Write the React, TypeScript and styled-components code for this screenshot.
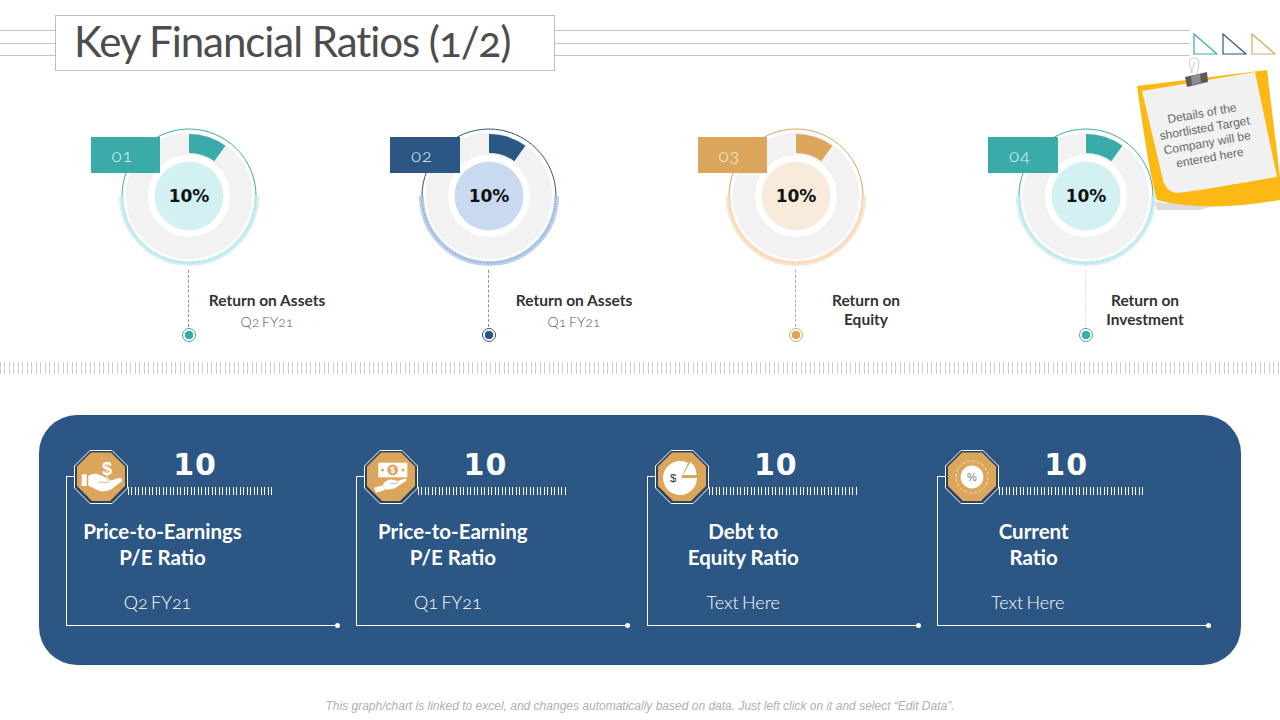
import * as React from 'react'
import styled, { createGlobalStyle } from 'styled-components'

// ___________________________________________________________________

const teal = '#3aaba8'
const navy = '#2c5784'
const tan = '#dba55c'

const metrics = [
  { tag: '01', tagLeft: -25, tagWidth: 69, color: teal, tint: '#d3f1f3', band: '#d3f1f3', stem: '#8a9a9c', name: ['Return on Assets'], period: 'Q2 FY21', shift: 1 },
  { tag: '02', tagLeft: -26, tagWidth: 70, color: navy, tint: '#c9d9ef', band: '#bccfeb', stem: '#8a9a9c', name: ['Return on Assets'], period: 'Q1 FY21', shift: 8 },
  { tag: '03', tagLeft: -25, tagWidth: 69, color: tan, tint: '#f9ebdc', band: '#fae3cc', stem: '#a8a8a8', name: ['Return on', 'Equity'], period: '', shift: -7 },
  { tag: '04', tagLeft: -25, tagWidth: 70, color: teal, tint: '#d3f1f3', band: '#d3f1f3', stem: '#d5e4e6', name: ['Return on', 'Investment'], period: '', shift: -18 }
]

const cards = [
  { icon: 'hand', title: ['Price-to-Earnings', 'P/E Ratio'], sub: 'Q2 FY21', shift: -5, ticks: 146 },
  { icon: 'cash', title: ['Price-to-Earning', 'P/E Ratio'], sub: 'Q1 FY21', shift: -5, ticks: 148 },
  { icon: 'pie', title: ['Debt to', 'Equity Ratio'], sub: 'Text Here', shift: 0, ticks: 150 },
  { icon: 'percent', title: ['Current', 'Ratio'], sub: 'Text Here', shift: -6, ticks: 147 }
]

// ___________________________________________________________________

const Dial = ({ color, tint, band }: { color: string; tint: string; band: string }) => (
  <svg width="146" height="146" viewBox="0 0 146 146">
    <path d="M5.5 73 A67.5 67.5 0 0 0 140.5 73" fill="none" stroke={band} strokeWidth="5" />
    <circle cx="73" cy="73" r="52" fill="none" stroke="#f2f2f2" strokeWidth="22" />
    <path d="M6 73 A67 67 0 0 1 140 73" fill="none" stroke={color} strokeWidth="1" />
    <path d="M6 73 A67 67 0 0 0 140 73" fill="none" stroke={color} strokeWidth="0.8" strokeDasharray="1 1.4" opacity="0.75" />
    <path d="M73 11 A62 62 0 0 1 109.4 22.8 L98.3 38.2 A43 43 0 0 0 73 30 Z" fill={color} />
    <circle cx="73" cy="73" r="34.5" fill={tint} />
  </svg>
)

const Octagon = () => (
  <>
    <polygon points="16,0.5 38,0.5 53.5,16 53.5,38 38,53.5 16,53.5 0.5,38 0.5,16" fill="#2b4463" stroke="#fff" strokeWidth="1" />
    <polygon points="17,2.5 37,2.5 51,16.5 51,36 36,51 18,51 3,36 3,16.5" fill={tan} />
  </>
)

const HandIcon = () => (
  <>
    <text x="33" y="25" textAnchor="middle" fontFamily="Liberation Sans, sans-serif" fontWeight="700" fontSize="18" fill="#fff">$</text>
    <rect x="7.7" y="24.3" width="5" height="11.7" fill="#fff" />
    <path d="M14.3 26 C18 23 23 23 27 25.5 L33 28 L37 30.5 L45 28 C48 28 49 30 47.5 31.5 L37 39.5 C32 42 27 42 23 40 L14.3 35.5 Z" fill="#fff" />
    <path d="M25 32 L33 32.5 C35.5 32.5 36 30.5 33 29" fill="none" stroke={tan} strokeWidth="0.8" />
  </>
)

const CashIcon = () => (
  <>
    <rect x="14.3" y="12.7" width="29" height="14.6" fill="#fff" />
    <circle cx="28.7" cy="20" r="5.4" fill={tan} />
    <circle cx="18.5" cy="20" r="1.6" fill={tan} />
    <circle cx="39" cy="20" r="1.6" fill={tan} />
    <text x="28.7" y="23" textAnchor="middle" fontFamily="Liberation Sans, sans-serif" fontWeight="700" fontSize="8.5" fill="#fff">$</text>
    <path d="M10 37.7 L19.3 35 L21 40 L12 42.7 Z" fill="#fff" />
    <path d="M19 34 C22 30 26 28.5 30 30 L34 31 L41 28.5 C43 28.5 43 30 42 31 L32 37.5 C28 39.5 25 39.5 21 39.5 Z" fill="#fff" />
    <path d="M26 33.5 L32 33.5 C34 33.5 34.5 31.8 33 31" fill="none" stroke={tan} strokeWidth="0.7" />
  </>
)

const PieIcon = () => (
  <>
    <path d="M33 13 A17 17 0 1 0 42 28 L26 28 Z" fill="#fff" />
    <path d="M28 25 L35.5 12 A17 17 0 0 1 41.5 25 Z" fill="#fff" />
    <text x="18.3" y="32" textAnchor="middle" fontFamily="Liberation Sans, sans-serif" fontSize="11.5" fill="#333">$</text>
  </>
)

const PercentIcon = () => (
  <>
    <circle cx="27" cy="27" r="16" fill="none" stroke="#f9e8c8" strokeWidth="1" strokeDasharray="3 2" />
    <circle cx="27" cy="27" r="11.4" fill="#fff" />
    <text x="27" y="31" textAnchor="middle" fontFamily="Liberation Sans, sans-serif" fontSize="11" fill="#777">%</text>
  </>
)

const icons: Record<string, React.ReactNode> = {
  hand: <HandIcon />,
  cash: <CashIcon />,
  pie: <PieIcon />,
  percent: <PercentIcon />
}

const Triangle = ({ color }: { color: string }) => (
  <svg width="25" height="22" viewBox="0 0 25 22">
    <path d="M1 1 V21 H24 Z" fill="none" stroke={color} strokeWidth="1.2" />
  </svg>
)

// ___________________________________________________________________

const App = () => (
  <Page>
    <GlobalStyle />
    <Header>
      <Rule $width={55} />
      <TitleBox>
        <Title>Key Financial Ratios (1/2)</Title>
      </TitleBox>
      <Rule $width={635} />
      <Triangles>
        <Triangle color={teal} />
        <Triangle color={navy} />
        <Triangle color={tan} />
      </Triangles>
    </Header>

    <Metrics>
      {metrics.map(m => (
        <Metric key={m.tag}>
          <DialWrap>
            <Dial color={m.color} tint={m.tint} band={m.band} />
            <Tag $color={m.color} $left={m.tagLeft} $width={m.tagWidth}>{m.tag}</Tag>
            <Percent>10%</Percent>
          </DialWrap>
          <Foot>
            <Stem $color={m.stem}>
              <Pin $color={m.color} />
            </Stem>
            <Label $shift={m.shift}>
              <LabelName $lines={m.name.length}>
                {m.name.map(line => (
                  <div key={line}>{line}</div>
                ))}
              </LabelName>
              {m.period && <Period>{m.period}</Period>}
            </Label>
          </Foot>
        </Metric>
      ))}
    </Metrics>

    <TickBand />

    <Panel>
      {cards.map(c => (
        <Card key={c.title[0]}>
          <CardHead>
            <Badge width="54" height="54" viewBox="0 0 54 54">
              <Octagon />
              {icons[c.icon]}
            </Badge>
            <HeadRight>
              <Value>10</Value>
              <HeadTicks $width={c.ticks} />
            </HeadRight>
          </CardHead>
          <CardTitle>
            {c.title.map(line => (
              <div key={line}>{line}</div>
            ))}
          </CardTitle>
          <CardSub $shift={c.shift}>{c.sub}</CardSub>
        </Card>
      ))}
    </Panel>

    <Note>
      <svg width="160" height="200" viewBox="0 0 160 200">
        <path d="M35 182 L37 190 L80 190 L92 186 Z" fill="#dcdcdc" />
        <path d="M17 66 L147 50 L160 157 L160 180 C120 187 75 190 37 180 C32 165 26 130 17 66 Z" fill="#fdb913" />
        <path d="M22 71 L135 52 L157 157 C120 163 85 170 57 173 C50 172 45 168 43 160 Z" fill="#f1f1f1" />
        <path d="M73 53 C68 44 68 38 74 38 C80 38 80 44 77 53 M71 53 C72 49 74 46 75 42" fill="none" stroke="#cfd4d8" strokeWidth="1.2" />
        <path d="M65 57 L87 52 L88 62 L67 67 Z" fill="#5c5c5c" />
        <path d="M71 56 L80 54 L81 63 L72 65 Z" fill="#8d8d8d" />
      </svg>
      <NoteText>Details of the shortlisted Target Company will be entered here</NoteText>
    </Note>

    <Disclaimer>This graph/chart is linked to excel, and changes automatically based on data. Just left click on it and select “Edit Data”.</Disclaimer>
  </Page>
)

export default App

// ___________________________________________________________________

const GlobalStyle = createGlobalStyle`
  html, body {
    margin: 0;
    padding: 0;
    background: #fff;
  }
`

const Page = styled.div`
  position: relative;
  width: 1280px;
  height: 720px;
  overflow: hidden;
  background: #fff;
  font-family: Lato, "Liberation Sans", sans-serif;
  font-variant-numeric: oldstyle-nums;
`

const Header = styled.header`
  display: flex;
  align-items: flex-start;
  height: 70px;
  padding-top: 15px;
  box-sizing: border-box;
`

const Rule = styled.div<{ $width: number }>`
  flex: 0 0 ${p => p.$width}px;
  height: 26px;
  box-sizing: border-box;
  margin-top: 15px;
  border-top: 1px solid #c4c4c4;
  border-bottom: 1px solid #c4c4c4;
  background: linear-gradient(#c4c4c4, #c4c4c4) 0 12px / 100% 1px no-repeat;
`

const TitleBox = styled.div`
  flex: 0 0 500px;
  height: 56px;
  box-sizing: border-box;
  border: 1px solid #bdbdbd;
  padding-left: 18px;
`

const Title = styled.h1`
  margin: 0;
  font-size: 42px;
  font-weight: 400;
  line-height: 50px;
  color: #4d4d4d;
  letter-spacing: -1.05px;
`

const Triangles = styled.div`
  display: flex;
  gap: 4px;
  margin: 18px 0 0 3px;
`

const Metrics = styled.section`
  display: grid;
  grid-template-columns: 300px 307px 290px 1fr;
  height: 219px;
  margin-top: 53px;
  padding-left: 116px;
`

const Metric = styled.div`
  display: flex;
  flex-direction: column;
`

const DialWrap = styled.div`
  position: relative;
  width: 146px;
  height: 146px;

  svg {
    display: block;
  }
`

const Tag = styled.div<{ $color: string; $left: number; $width: number }>`
  position: absolute;
  left: ${p => p.$left}px;
  top: 14px;
  width: ${p => p.$width}px;
  height: 36px;
  padding-right: 6px;
  box-sizing: border-box;
  display: flex;
  align-items: center;
  justify-content: center;
  background: ${p => p.$color};
  color: #e6f6f5;
  font-size: 18px;
  font-weight: 300;
  letter-spacing: 1px;
`

const Percent = styled.div`
  position: absolute;
  inset: 0;
  display: flex;
  align-items: center;
  justify-content: center;
  font-family: "DejaVu Sans", sans-serif;
  font-size: 17px;
  font-weight: 700;
  color: #111;
`

const Foot = styled.div`
  display: flex;
`

const Stem = styled.div<{ $color: string }>`
  position: relative;
  flex: 0 0 14px;
  height: 73px;
  margin-left: 66px;
  box-sizing: border-box;
  padding-top: 59px;

  &::before {
    content: '';
    position: absolute;
    left: 6px;
    top: 1px;
    height: 57px;
    border-left: 1px dashed ${p => p.$color};
  }
`

const Pin = styled.div<{ $color: string }>`
  width: 14px;
  height: 14px;
  box-sizing: border-box;
  border: 1px solid ${p => p.$color};
  border-radius: 50%;
  background: radial-gradient(circle, ${p => p.$color} 0 4px, #fff 4.5px);
`

const Label = styled.div<{ $shift: number }>`
  flex: 0 0 140px;
  margin-left: ${p => p.$shift}px;
  text-align: center;
`

const LabelName = styled.div<{ $lines: number }>`
  padding-top: ${p => (p.$lines > 1 ? 22 : 23)}px;
  font-size: 15.5px;
  font-weight: 700;
  line-height: ${p => (p.$lines > 1 ? 19 : 16)}px;
  color: #333;
`

const Period = styled.div`
  margin-top: 6px;
  font-size: 14px;
  font-weight: 300;
  line-height: 16px;
  word-spacing: -1px;
  color: #555;
`

const TickBand = styled.div`
  height: 12px;
  margin-top: 20px;
  background: repeating-linear-gradient(90deg, #cfcfcf 0 1px, #fff 1px 4px, #cfcfcf 4px 5px, #fff 5px 9px);
`

const Panel = styled.section`
  display: grid;
  grid-template-columns: repeat(4, 271px);
  column-gap: 19.4px;
  height: 250px;
  margin: 41px 39px 0;
  padding: 61px 0 0 27px;
  box-sizing: border-box;
  border-radius: 38px;
  background: ${navy};
`

const Card = styled.div`
  position: relative;
  height: 150px;
  box-sizing: border-box;
  border-left: 1px solid #fff;
  border-bottom: 1px solid #fff;
  color: #fff;

  &::before {
    content: '';
    position: absolute;
    left: 0;
    top: 0;
    width: 8px;
    border-top: 1px solid #fff;
  }

  &::after {
    content: '';
    position: absolute;
    right: -3px;
    bottom: -3px;
    width: 5px;
    height: 5px;
    border-radius: 50%;
    background: #fff;
  }
`

const CardHead = styled.div`
  display: flex;
  height: 54px;
  margin: -26px 0 0 7px;
`

const Badge = styled.svg`
  display: block;
  flex: 0 0 54px;
`

const HeadRight = styled.div`
  width: 150px;
`

const Value = styled.div`
  width: 134px;
  height: 37px;
  font-family: "DejaVu Sans", sans-serif;
  font-size: 30px;
  font-weight: 700;
  font-variant-numeric: lining-nums;
  letter-spacing: 1px;
  line-height: 29px;
  text-align: center;
`

const HeadTicks = styled.div<{ $width: number }>`
  width: ${p => p.$width}px;
  height: 8px;
  background: repeating-linear-gradient(90deg, #fff 0 1px, transparent 1px 3px, #fff 3px 4px, transparent 4px 7px);
`

const CardTitle = styled.div`
  width: 191px;
  margin-top: 14px;
  font-size: 20.5px;
  font-weight: 700;
  line-height: 26px;
  text-align: center;
`

const CardSub = styled.div<{ $shift: number }>`
  width: 191px;
  margin: 21px 0 0 ${p => p.$shift}px;
  font-size: 18px;
  font-weight: 300;
  line-height: 22px;
  word-spacing: -1.5px;
  text-align: center;
`

const Note = styled.aside`
  position: absolute;
  left: 1120px;
  top: 20px;
  width: 160px;
  height: 200px;

  svg {
    display: block;
  }
`

const NoteText = styled.p`
  position: absolute;
  left: 36px;
  top: 86px;
  width: 100px;
  margin: 0;
  font-family: "Liberation Sans", sans-serif;
  font-size: 12px;
  line-height: 15px;
  text-align: center;
  color: #666;
  transform: rotate(-10deg);
`

const Disclaimer = styled.p`
  margin: 33px 0 0;
  font-family: "Liberation Sans", sans-serif;
  font-size: 12px;
  font-style: italic;
  line-height: 16px;
  text-align: center;
  color: #b0b0b0;
`
